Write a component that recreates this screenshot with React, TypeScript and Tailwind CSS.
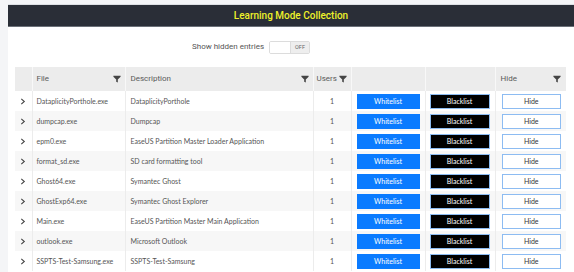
import React from "react";

const rows: [string, string][] = [
  ["DataplicityPorthole.exe", "DataplicityPorthole"],
  ["dumpcap.exe", "Dumpcap"],
  ["epm0.exe", "EaseUS Partition Master Loader Application"],
  ["format_sd.exe", "SD card formatting tool"],
  ["Ghost64.exe", "Symantec Ghost"],
  ["GhostExp64.exe", "Symantec Ghost Explorer"],
  ["Main.exe", "EaseUS Partition Master Main Application"],
  ["outlook.exe", "Microsoft Outlook"],
  ["SSPTS-Test-Samsung.exe", "SSPTS-Test-Samsung"],
];

function Funnel() {
  return (
    <svg width="8" height="8" viewBox="0 0 10 10" className="shrink-0">
      <path d="M0.5 1 H9.5 V2.2 L6 5.6 V9.5 L4 8.3 V5.6 L0.5 2.2 Z" fill="#444" />
    </svg>
  );
}

function Chevron() {
  return (
    <svg width="6" height="7" viewBox="0 0 6 7">
      <path d="M1.3 0.8 L4.3 3.5 L1.3 6.2" fill="none" stroke="#444" strokeWidth="1.1" />
    </svg>
  );
}

export default function App() {
  return (
    <div className="w-[574px] h-[272px] overflow-hidden bg-[#f4f5f7] pl-[8px] pt-[4px]" style={{ fontFamily: "Roboto, 'Open Sans', sans-serif" }}>
      <div className="bg-white h-[268px] border-t border-[#dde0e4]">
        <div className="h-[22px] bg-[#2a2e37] flex items-center justify-center border-b border-[#6b7078]">
          <span className="text-[10px] text-[#eef22a] font-medium">Learning Mode Collection</span>
        </div>
        <div className="h-[40px] flex items-center justify-center pr-[80px]">
          <span className="text-[8px] text-[#555] mr-[5px]">Show hidden entries</span>
          <div className="flex h-[13px] border border-[#dcdcdc] rounded-[2px] overflow-hidden">
            <div className="w-[20px] bg-white"></div>
            <div className="w-[19px] bg-[#eeeeee] border-l border-[#dcdcdc] flex items-center justify-center text-[5.5px] text-[#666]">OFF</div>
          </div>
        </div>
        <div className="pl-[7px]">
          <table className="table-fixed border-collapse w-[551px]">
            <colgroup>
              <col className="w-[17px]" />
              <col className="w-[93px]" />
              <col className="w-[188px]" />
              <col className="w-[38px]" />
              <col className="w-[74px]" />
              <col className="w-[70px]" />
              <col className="w-[71px]" />
            </colgroup>
            <thead>
              <tr className="h-[24px] bg-[#ececec] text-[8px] text-[#5a5a5a] font-normal">
                <th className="border-r border-[#f8f8f8]"></th>
                <th className="border-r border-[#f8f8f8] text-left font-normal pl-[4px] pr-[4px]">
                  <div className="flex items-center justify-between"><span>File</span><Funnel /></div>
                </th>
                <th className="border-r border-[#f8f8f8] text-left font-normal pl-[5px] pr-[4px]">
                  <div className="flex items-center justify-between"><span>Description</span><Funnel /></div>
                </th>
                <th className="border-r border-[#f8f8f8] text-left font-normal pl-[3px]">
                  <div className="flex items-center gap-[2px]"><span>Users</span><Funnel /></div>
                </th>
                <th className="border-r border-[#f8f8f8]"></th>
                <th className="border-r border-[#f8f8f8]"></th>
                <th className="text-left font-normal pl-[5px] pr-[5px]">
                  <div className="flex items-center justify-between"><span>Hide</span><Funnel /></div>
                </th>
              </tr>
            </thead>
            <tbody style={{ fontFamily: "Lato, 'Open Sans', sans-serif" }}>
              {rows.map(([file, desc], i) => (
                <tr key={file} className={`h-[20px] text-[7px] text-[#555] ${i % 2 === 1 ? "bg-[#f7f7f7]" : "bg-white"}`}>
                  <td className="border-r border-[#ececec] pl-[5px]"><Chevron /></td>
                  <td className="border-r border-[#ececec] pl-[4px] whitespace-nowrap overflow-hidden">{file}</td>
                  <td className="border-r border-[#ececec] pl-[5px] whitespace-nowrap overflow-hidden">{desc}</td>
                  <td className="border-r border-[#ececec] text-center">1</td>
                  <td className="border-r border-[#ececec] px-[5px]">
                    <div className="h-[15px] bg-[#0a7bff] text-white flex items-center justify-center">Whitelist</div>
                  </td>
                  <td className="border-r border-[#ececec] pl-[4px] pr-[5px]">
                    <div className="h-[15px] bg-black text-white border border-[#8dbcf2] flex items-center justify-center">Blacklist</div>
                  </td>
                  <td className="pl-[6px] pr-[5px]">
                    <div className="h-[15px] bg-white text-[#333] border border-[#8dbcf2] flex items-center justify-center">Hide</div>
                  </td>
                </tr>
              ))}
            </tbody>
          </table>
        </div>
      </div>
    </div>
  );
}
